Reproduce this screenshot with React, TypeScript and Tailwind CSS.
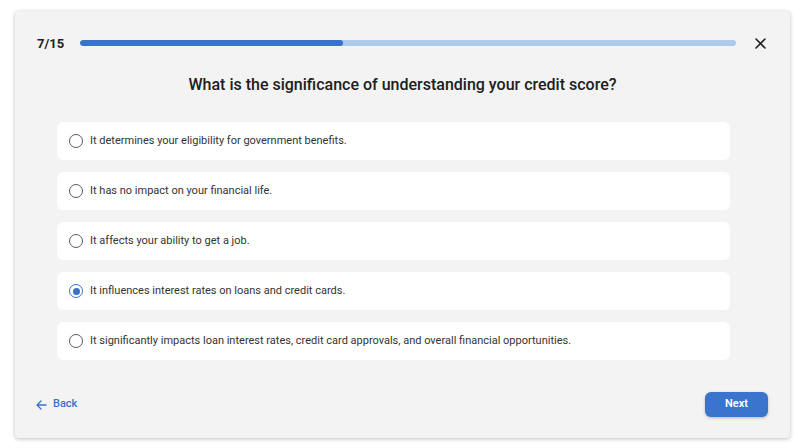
import React from "react";

const options = [
  "It determines your eligibility for government benefits.",
  "It has no impact on your financial life.",
  "It affects your ability to get a job.",
  "It influences interest rates on loans and credit cards.",
  "It significantly impacts loan interest rates, credit card approvals, and overall financial opportunities.",
];

export default function App() {
  const selected = 3;
  return (
    <div className="w-[806px] h-[448px] bg-white pl-[15px] pt-[11px]" style={{ fontFamily: "Roboto, 'Liberation Sans', sans-serif" }}>
      <div className="w-[775px] h-[427px] bg-[#f3f3f3] rounded-[4px] shadow-[0_1px_4px_rgba(0,0,0,0.25)] flex flex-col pt-[22px] pb-[21px]">
        <div className="flex items-center h-[20px] pl-[22px] pr-[24px]">
          <span className="text-[13px] font-bold text-[#222] leading-none">7/15</span>
          <div className="ml-[16px] flex-1 h-[6px] rounded-full bg-[#adc9ec] overflow-hidden">
            <div className="h-full w-[40%] bg-[#3a72c8] rounded-full" />
          </div>
          <button className="ml-[18px] w-[12px] h-[12px] flex items-center justify-center text-[#222]">
            <svg width="11" height="11" viewBox="0 0 11 11" fill="none" stroke="currentColor" strokeWidth="1.6" strokeLinecap="round">
              <path d="M1 1L10 10M10 1L1 10" />
            </svg>
          </button>
        </div>
        <h1 className="mt-[20px] text-center text-[16px] leading-[24px] font-medium text-[#202020]">
          What is the significance of understanding your credit score?
        </h1>
        <div className="mt-[25px] ml-[42px] w-[673px] flex flex-col gap-[12px]">
          {options.map((o, i) => (
            <div key={i} className="h-[38px] bg-white rounded-[6px] flex items-center pl-[12px]">
              {i === selected ? (
                <span className="w-[14px] h-[14px] rounded-full border-[1.5px] border-[#3a72c8] flex items-center justify-center">
                  <span className="w-[7px] h-[7px] rounded-full bg-[#3a72c8]" />
                </span>
              ) : (
                <span className="w-[14px] h-[14px] rounded-full border-[1.5px] border-[#5a5a5a]" />
              )}
              <span className="ml-[7px] text-[11px] text-[#333]">{o}</span>
            </div>
          ))}
        </div>
        <div className="mt-auto flex items-center justify-between pl-[21px] pr-[22px]">
          <button className="flex items-center gap-[6px] text-[#3a72c8] text-[11px] font-medium">
            <svg width="11" height="10" viewBox="0 0 11 10" fill="none" stroke="currentColor" strokeWidth="1.3" strokeLinecap="round" strokeLinejoin="round">
              <path d="M10 5H1.5M5 1L1 5L5 9" />
            </svg>
            Back
          </button>
          <button className="w-[63px] h-[25px] rounded-[6px] bg-[#3a74cc] text-white text-[11px] font-semibold shadow-[0_1px_3px_rgba(0,0,0,0.25)]">
            Next
          </button>
        </div>
      </div>
    </div>
  );
}
